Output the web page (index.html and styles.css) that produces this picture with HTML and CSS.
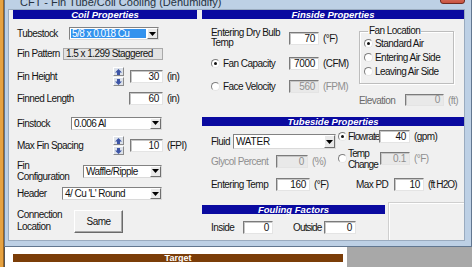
FILE: index.html
```html
<!DOCTYPE html>
<html>
<head>
<meta charset="utf-8">
<link rel="stylesheet" href="styles.css">
</head>
<body>
<div class="strip"></div>
<div class="win">
  <div class="titlebar">
    <span class="title">CFT - Fin Tube/Coil Cooling (Dehumidify)</span>
    <span class="close"></span>
  </div>
  <div class="content">
    <section class="coil">
      <div class="hdr hdr-coil">Coil Properties</div>
      <div class="row c1">
        <span class="lbl w52">Tubestock</span>
        <div class="sel w90"><span class="sv hl">5/8 x 0.018 Cu</span><span class="dd"><svg width="7" height="4" viewBox="0 0 7 4"><path d="M0 0h7L3.5 4z" fill="#000"/></svg></span></div>
      </div>
      <div class="row c2">
        <span class="lbl w46">Fin Pattern</span>
        <div class="ro w100">1.5 x 1.299 Staggered</div>
      </div>
      <div class="row c3">
        <span class="lbl w96">Fin Height</span>
        <div class="spin">
          <span class="sb"><svg width="7" height="6" viewBox="0 0 7 6"><path d="M3.5 0L7 3.5H5V6H2V3.5H0z" fill="#3d55a6"/></svg></span>
          <span class="sb"><svg width="7" height="6" viewBox="0 0 7 6"><path d="M3.5 6L7 2.5H5V0H2V2.5H0z" fill="#3d55a6"/></svg></span>
        </div>
        <span class="inp w33 ml6">30</span><span class="unit">(in)</span>
      </div>
      <div class="row c4">
        <span class="lbl w112">Finned Length</span>
        <span class="inp w34">60</span><span class="unit">(in)</span>
      </div>
      <div class="row c5">
        <span class="lbl w54">Finstock</span>
        <div class="sel w91"><span class="sv">0.006 Al</span><span class="dd"><svg width="7" height="4" viewBox="0 0 7 4"><path d="M0 0h7L3.5 4z" fill="#000"/></svg></span></div>
      </div>
      <div class="row c6">
        <span class="lbl w96">Max Fin Spacing</span>
        <div class="spin">
          <span class="sb"><svg width="7" height="6" viewBox="0 0 7 6"><path d="M3.5 0L7 3.5H5V6H2V3.5H0z" fill="#3d55a6"/></svg></span>
          <span class="sb"><svg width="7" height="6" viewBox="0 0 7 6"><path d="M3.5 6L7 2.5H5V0H2V2.5H0z" fill="#3d55a6"/></svg></span>
        </div>
        <span class="inp w33 ml6">10</span><span class="unit">(FPI)</span>
      </div>
      <div class="row c7">
        <span class="lbl lbl2 w66">Fin<br>Configuration</span>
        <div class="sel w79"><span class="sv">Waffle/Ripple</span><span class="dd"><svg width="7" height="4" viewBox="0 0 7 4"><path d="M0 0h7L3.5 4z" fill="#000"/></svg></span></div>
      </div>
      <div class="row c8">
        <span class="lbl w45">Header</span>
        <div class="sel w100"><span class="sv">4/ Cu 'L' Round</span><span class="dd"><svg width="7" height="4" viewBox="0 0 7 4"><path d="M0 0h7L3.5 4z" fill="#000"/></svg></span></div>
      </div>
      <div class="row c9">
        <span class="lbl lbl3 w57">Connection<br>Location</span>
        <span class="btn">Same</span>
      </div>
    </section>

    <section class="side">
      <div class="hdr hdr-fin">Finside Properties</div>
      <div class="fin-body">
        <div class="fin-left">
          <div class="row f1">
            <span class="lbl lbl4 w78">Entering Dry Bulb<br>Temp</span>
            <span class="inp w30">70</span><span class="unit">(°F)</span>
          </div>
          <div class="row f2">
            <span class="lbl w78"><span class="rad on"></span>Fan Capacity</span>
            <span class="inp w30">7000</span><span class="unit">(CFM)</span>
          </div>
          <div class="row f3">
            <span class="lbl w78"><span class="rad"></span>Face Velocity</span>
            <span class="inp dis w30">560</span><span class="unit grey">(FPM)</span>
          </div>
        </div>
        <div class="fin-right">
          <fieldset class="group">
            <legend>Fan Location</legend>
            <div class="gitem"><span class="rad on"></span>Standard Air</div>
            <div class="gitem"><span class="rad"></span>Entering Air Side</div>
            <div class="gitem"><span class="rad"></span>Leaving Air Side</div>
          </fieldset>
          <div class="row elev">
            <span class="lbl w46 dgrey">Elevation</span>
            <span class="inp dis h12 w39">0</span><span class="unit ml5 grey">(ft)</span>
          </div>
        </div>
      </div>

      <div class="hdr hdr-tube">Tubeside Properties</div>
      <div class="tube-body">
        <div class="tube-left">
          <div class="row t1">
            <span class="lbl w22">Fluid</span>
            <div class="sel h15 w103"><span class="sv sv15">WATER</span><span class="dd"><svg width="7" height="4" viewBox="0 0 7 4"><path d="M0 0h7L3.5 4z" fill="#000"/></svg></span></div>
          </div>
          <div class="row t2">
            <span class="lbl w65 grey">Glycol Percent</span>
            <span class="inp dis w32">0</span><span class="unit ml5 grey">(%)</span>
          </div>
          <div class="row t3">
            <span class="lbl w65">Entering Temp</span>
            <span class="inp w34">160</span><span class="unit ml3">(°F)</span>
          </div>
        </div>
        <div class="tube-right">
          <div class="row t4">
            <span class="lbl tight w41"><span class="rad on r1"></span>Flowrate</span>
            <span class="inp w31">40</span><span class="unit ml3">(gpm)</span>
          </div>
          <div class="row t5">
            <span class="rad r1"></span>
            <span class="lbl lbl2 tight w32">Temp<br>Change</span>
            <span class="inp dis w30">0.1</span><span class="unit ml7 grey">(°F)</span>
          </div>
          <div class="row t6">
            <span class="lbl w38 ml18">Max PD</span>
            <span class="inp w30">10</span><span class="unit ml2 tight">(ft H2O)</span>
          </div>
        </div>
      </div>

      <div class="foul">
        <div class="foul-left">
          <div class="hdr hdr-foul">Fouling Factors</div>
          <div class="row ff">
            <span class="lbl w32">Inside</span>
            <span class="inp w30">0</span>
            <span class="lbl tight w31 ml20">Outside</span>
            <span class="inp w32">0</span>
          </div>
        </div>
        <div class="foul-right"></div>
      </div>
    </section>
  </div>
</div>
<div class="lower">
  <div class="target">Target</div>
</div>
</body>
</html>
```

FILE: styles.css
```css
* { box-sizing: border-box; margin: 0; padding: 0; }
html, body { margin: 0; padding: 0; }
body {
  width: 472px; height: 267px; overflow: hidden; position: relative;
  background: #a8a8a8;
  font-family: "Liberation Sans", Arial, sans-serif;
  font-size: 10px; letter-spacing: -0.55px; color: #141414;
}
.strip { position: absolute; left: 0; top: 0; width: 4px; height: 267px; background: #e6a241; border-right: 1px solid #9b6420; }
.win {
  position: absolute; left: 4px; top: 0; width: 468px; height: 247px;
  background: #bdd0e5; border: 1px solid #627790; border-top: 0;
  padding: 0 6px 5px 3px; display: flex; flex-direction: column;
}
.titlebar { height: 9px; position: relative; overflow: hidden; flex: none; }
.title { position: absolute; left: 12px; top: -5px; font-size: 11px; line-height: 14px; letter-spacing: 0; color: #26323f; white-space: nowrap; }
.close { position: absolute; left: 432px; top: -12px; width: 25px; height: 16px; border: 1px solid #6e2a22; border-radius: 3px; background: linear-gradient(#e5a293, #c9523f); }
.content { flex: 1; background: #f0f0f0; border: 1px solid #9aabbf; display: flex; }

.coil { width: 190px; display: flex; flex-direction: column; }
.side { flex: 1; display: flex; flex-direction: column; }

.hdr { height: 9px; background: #0a0aa0; color: #fff; font-weight: bold; font-style: italic; font-size: 9.5px; line-height: 9px; text-align: center; letter-spacing: 0; flex: none; }
.hdr-coil { margin-left: 4px; width: 184px; }
.hdr-fin { margin-left: 3px; width: 262px; }
.hdr-tube { margin-left: 3px; width: 262px; margin-top: 11px; }
.hdr-foul { margin-left: 3px; width: 183px; margin-top: 3px; }

.row { display: flex; align-items: center; flex: none; }
.coil .row { padding-left: 8px; }
.c1 { margin-top: 7px; height: 15px; }
.c2 { margin-top: 6px; height: 13px; }
.c3 { margin-top: 7px; height: 19px; }
.c4 { margin-top: 5px; height: 14px; }
.c5 { margin-top: 11px; height: 14px; }
.c6 { margin-top: 6px; height: 19px; }
.c7 { margin-top: 5px; height: 22px; }
.c8 { margin-top: 5px; height: 13px; }
.c9 { margin-top: 9px; height: 24px; }

.lbl { flex: none; white-space: nowrap; display: flex; align-items: center; }
.lbl2 { display: block; line-height: 11px; }
.lbl3 { display: block; line-height: 12px; }
.lbl4 { display: block; line-height: 10px; }
.tight { letter-spacing: -0.85px; }
.grey { color: #8f8f8f; }
.dgrey { color: #6a6a6a; }

.w22 { width: 22px; } .w30 { width: 30px; } .w31 { width: 31px; } .w32 { width: 32px; }
.w33 { width: 33px; } .w34 { width: 34px; } .w38 { width: 38px; } .w39 { width: 39px; }
.w41 { width: 41px; } .w45 { width: 45px; } .w46 { width: 46px; } .w52 { width: 52px; }
.w54 { width: 54px; } .w57 { width: 57px; } .w65 { width: 65px; } .w66 { width: 66px; }
.w78 { width: 78px; } .w79 { width: 79px; } .w90 { width: 90px; } .w91 { width: 91px; }
.w96 { width: 96px; } .w100 { width: 100px; } .w103 { width: 103px; } .w112 { width: 112px; }
.ml2 { margin-left: 2px; } .ml3 { margin-left: 3px; } .ml5 { margin-left: 5px; } .ml6 { margin-left: 6px; }
.ml7 { margin-left: 7px; } .ml18 { margin-left: 18px; } .ml20 { margin-left: 20px; }

.sel { height: 13px; background: #fff; border: 1px solid; border-color: #828282 #dadada #dadada #828282; display: flex; flex: none; }
.h15 { height: 15px; }
.sv { flex: 1; padding-left: 2px; line-height: 11px; overflow: hidden; white-space: nowrap; }
.sv15 { line-height: 13px; letter-spacing: -0.2px; }
.hl { background: #3393ee; color: #fff; margin: 1px; line-height: 9px; padding-left: 1px; }
.dd { width: 11px; flex: none; background: #e9e9e9; border: 1px solid; border-color: #fff #707070 #707070 #fff; display: flex; align-items: center; justify-content: center; }

.ro { height: 12px; flex: none; background: #e3e3e3; border: 1px solid #a9a9a9; padding-left: 2px; line-height: 10px; white-space: nowrap; }

.inp { height: 13px; flex: none; background: #fff; border: 1px solid; border-color: #7b7b7b #e4e4e4 #e4e4e4 #7b7b7b; box-shadow: inset 1px 1px 0 #c6c6c6; text-align: right; padding-right: 3px; line-height: 11px; letter-spacing: -0.3px; }
.inp.dis { background: #e9e9e9; color: #8f8f8f; }
.h12 { height: 12px; line-height: 10px; }
.unit { margin-left: 4px; white-space: nowrap; }

.spin { width: 11px; height: 19px; display: flex; flex-direction: column; gap: 1px; flex: none; }
.sb { height: 9px; background: #dde2ea; border: 1px solid; border-color: #fff #8a8a8a #8a8a8a #fff; display: flex; align-items: center; justify-content: center; }

.btn { width: 49px; height: 23px; flex: none; background: #f0f0f0; border: 1px solid; border-color: #fff #6a6a6a #6a6a6a #fff; box-shadow: inset -1px -1px 0 #a8a8a8; display: flex; align-items: center; justify-content: center; }

.rad { width: 9px; height: 9px; border-radius: 50%; background: #fff; border: 1px solid; border-color: #7f7f7f #e6e6e6 #e6e6e6 #7f7f7f; position: relative; flex: none; margin-right: 3px; display: inline-block; }
.rad.on::after { content: ""; position: absolute; left: 2px; top: 2px; width: 3px; height: 3px; border-radius: 50%; background: #111; }
.r1 { margin-right: 1px; }

.fin-body { display: flex; padding-left: 12px; flex: none; }
.fin-left { width: 148px; display: flex; flex-direction: column; }
.fin-right { width: 105px; display: flex; flex-direction: column; }
.f1 { margin-top: 9px; height: 20px; }
.f2 { margin-top: 8px; height: 15px; }
.f3 { margin-top: 8px; height: 14px; }

.group { margin-top: 7px; width: 95px; height: 58px; min-width: 0; border: 1px solid #bdbdbd; box-shadow: 1px 1px 0 #fff, inset 1px 1px 0 #fff; padding: 0 0 0 4px; }
.group legend { margin-left: 4px; padding: 0 1px; line-height: 10px; }
.gitem { height: 14px; display: flex; align-items: center; white-space: nowrap; }
.gitem .rad { margin-right: 2px; }
.elev { margin-top: 10px; height: 12px; }

.tube-body { display: flex; padding-left: 12px; flex: none; }
.tube-left { width: 127px; display: flex; flex-direction: column; }
.tube-right { width: 126px; display: flex; flex-direction: column; }
.t1 { margin-top: 8px; height: 15px; }
.t2 { margin-top: 6px; height: 13px; }
.t3 { margin-top: 10px; height: 13px; }
.t4 { margin-top: 4px; height: 13px; }
.t5 { margin-top: 5px; height: 21px; }
.t6 { margin-top: 9px; height: 13px; }

.foul { display: flex; margin-top: 11px; flex: 1; }
.foul-left { width: 189px; display: flex; flex-direction: column; }
.foul-right { flex: 1; border-left: 1px solid #cfcfcf; border-top: 1px solid #cfcfcf; box-shadow: inset 1px 1px 0 #fff; }
.ff { margin-top: 7px; height: 13px; padding-left: 12px; }

.lower { position: absolute; left: 4px; top: 247px; width: 343px; height: 20px; background: #fff; border-left: 1px solid #555; }
.target { margin: 7px 0 0 8px; width: 330px; height: 8px; background: #7b3d08; color: #fff; font-weight: bold; font-size: 9px; line-height: 8px; text-align: center; letter-spacing: 0; }
```
